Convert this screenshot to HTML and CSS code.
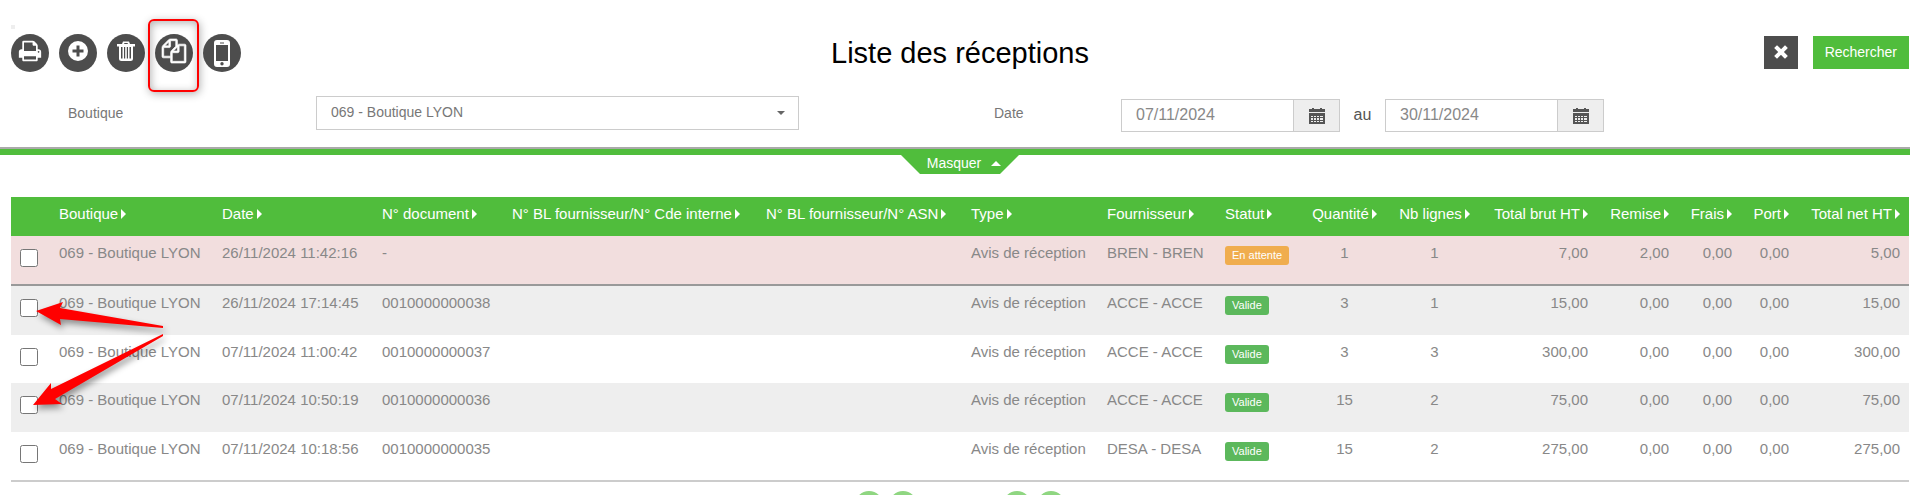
FILE: index.html
```html
<!DOCTYPE html>
<html lang="fr">
  <head>
    <meta charset="UTF-8" />
    <meta name="viewport" content="width=device-width, initial-scale=1.0" />
    <title>Liste des réceptions</title>
    <link rel="stylesheet" href="styles.css">
  </head>
  <body>
    <header class="topbar">
      <div class="actions">
        <span class="handle"></span>
        <button type="button" class="round-button" aria-label="Imprimer">
          <svg width="24" height="24" viewBox="0 0 1792 1792"><path d="M448 1536h896v-256h-896v256zm0-640h896v-384h-160q-40 0-68-28t-28-68v-160h-640v640zm1152 64q0-26-19-45t-45-19-45 19-19 45 19 45 45 19 45-19 19-45zm128 0v416q0 13-9.500 22.500t-22.500 9.500h-224v160q0 40-28 68t-68 28h-960q-40 0-68-28t-28-68v-160h-224q-13 0-22.500-9.500t-9.500-22.500v-416q0-79 56.500-135.500t135.500-56.500h64v-544q0-40 28-68t68-28h672q40 0 88 20t76 48l152 152q28 28 48 76t20 88v256h64q79 0 135.500 56.500t56.500 135.500z"/></svg>
        </button>
        <button type="button" class="round-button" aria-label="Ajouter">
          <svg width="24" height="24" viewBox="0 0 24 24"><path fill-rule="evenodd" d="M12 2a10 10 0 1 0 0 20a10 10 0 1 0 0-20zM10.500 6.500h3v4h4v3h-4v4h-3v-4h-4v-3h4z"/></svg>
        </button>
        <button type="button" class="round-button" aria-label="Supprimer">
          <svg width="24" height="24" viewBox="0 0 24 24"><path fill-rule="evenodd" d="M3 5h5l1-2.500h6l1 2.500h5v2.500h-2v12a2.500 2.500 0 0 1-2.500 2.500h-9a2.500 2.500 0 0 1-2.500-2.500v-12h-2zM10 5h4l-.5-1h-3zM7 8v11.500h1.500v-11.500zM10 8v11.500h1.200v-11.500zM12.800 8v11.500h1.200v-11.500zM15.500 8v11.500h1.500v-11.500z"/></svg>
        </button>
        <button type="button" class="round-button highlighted" aria-label="Dupliquer">
          <svg class="bold" width="24" height="24" viewBox="0 0 1792 1792"><path d="M1696 384q40 0 68 28t28 68v1216q0 40-28 68t-68 28h-960q-40 0-68-28t-28-68v-288h-544q-40 0-68-28t-28-68v-672q0-40 20-88t48-76l408-408q28-28 76-48t88-20h416q40 0 68 28t28 68v328q68-40 128-40h416zm-544 213l-299 299h299v-299zm-640-384l-299 299h299v-299zm196 647l316-316v-416h-384v416q0 40-28 68t-68 28h-416v640h512v-256q0-40 20-88t48-76zm956 804v-1152h-384v416q0 40-28 68t-68 28h-416v640h896z"/></svg>
        </button>
        <button type="button" class="round-button phone" aria-label="Mobile">
          <svg width="16" height="27" viewBox="0 0 16 27"><path fill-rule="evenodd" d="M3 0h10a3 3 0 0 1 3 3v21a3 3 0 0 1-3 3h-10a3 3 0 0 1-3-3v-21a3 3 0 0 1 3-3zM2 5v16h12v-16zM6 2.500v1h4v-1zM8 22a1.700 1.700 0 1 0 0 3.400a1.700 1.700 0 1 0 0-3.400z"/></svg>
        </button>
      </div>
      <h1>Liste des réceptions</h1>
      <div class="search-actions">
        <button type="button" class="btn btn-dark" aria-label="Effacer">
          <svg width="14" height="14" viewBox="0 0 14 14"><path d="M3 3l8 8M11 3l-8 8" stroke="#fff" stroke-width="4" stroke-linecap="square"/></svg>
        </button>
        <button type="button" class="btn btn-green">Rechercher</button>
      </div>
    </header>

    <form class="filters">
      <label for="boutique">Boutique</label>
      <div class="select-box">
        <select id="boutique">
          <option>069 - Boutique LYON</option>
        </select>
      </div>
      <label for="dateFrom" class="date-label">Date</label>
      <div class="dates">
        <div class="date-group">
          <input type="text" id="dateFrom" value="07/11/2024" />
          <button type="button" aria-label="Choisir la date de début">
            <svg width="16" height="16" viewBox="0 0 16 16"><path fill-rule="evenodd" d="M0 1h3v-1h2v1h6v-1h2v1h3v3h-16zM0 5h16v11h-16zM2 8v1h2v-1zM5 8v1h2v-1zM8 8v1h2v-1zM11 8v1h3v-1zM2 10v2h2v-2zM5 10v2h2v-2zM8 10v2h2v-2zM11 10v2h3v-2zM2 13v1h2v-1zM5 13v1h2v-1zM8 13v1h2v-1zM11 13v1h3v-1z"/></svg>
          </button>
        </div>
        <label for="dateTo" class="between">au</label>
        <div class="date-group">
          <input type="text" id="dateTo" value="30/11/2024" />
          <button type="button" aria-label="Choisir la date de fin">
            <svg width="16" height="16" viewBox="0 0 16 16"><path fill-rule="evenodd" d="M0 1h3v-1h2v1h6v-1h2v1h3v3h-16zM0 5h16v11h-16zM2 8v1h2v-1zM5 8v1h2v-1zM8 8v1h2v-1zM11 8v1h3v-1zM2 10v2h2v-2zM5 10v2h2v-2zM8 10v2h2v-2zM11 10v2h3v-2zM2 13v1h2v-1zM5 13v1h2v-1zM8 13v1h2v-1zM11 13v1h3v-1z"/></svg>
          </button>
        </div>
      </div>
    </form>

    <div class="separator">
      <button type="button" class="toggle">Masquer <span class="caret-up"></span></button>
    </div>

    <main class="list">
      <table>
        <colgroup>
          <col class="c-check"><col class="c-shop"><col class="c-date"><col class="c-doc">
          <col class="c-order"><col class="c-asn"><col class="c-type"><col class="c-supplier">
          <col class="c-status"><col class="c-qty"><col class="c-lines"><col class="c-gross">
          <col class="c-discount"><col class="c-fees"><col class="c-port"><col class="c-net">
        </colgroup>
        <thead>
          <tr>
            <th></th>
            <th class="sort">Boutique</th>
            <th class="sort">Date</th>
            <th class="sort">N° document</th>
            <th class="sort">N° BL fournisseur/N° Cde interne</th>
            <th class="sort">N° BL fournisseur/N° ASN</th>
            <th class="sort">Type</th>
            <th class="sort">Fournisseur</th>
            <th class="sort">Statut</th>
            <th class="sort center">Quantité</th>
            <th class="sort center">Nb lignes</th>
            <th class="sort num">Total brut HT</th>
            <th class="sort num">Remise</th>
            <th class="sort num">Frais</th>
            <th class="sort num">Port</th>
            <th class="sort num">Total net HT</th>
          </tr>
        </thead>
        <tbody>
          <tr class="pending">
            <td><input type="checkbox" aria-label="Réception du 26/11/2024 11:42:16" /></td>
            <td>069 - Boutique LYON</td>
            <td>26/11/2024 11:42:16</td>
            <td>-</td>
            <td></td>
            <td></td>
            <td>Avis de réception</td>
            <td>BREN - BREN</td>
            <td><span class="badge waiting">En attente</span></td>
            <td class="center">1</td>
            <td class="center">1</td>
            <td class="num">7,00</td>
            <td class="num">2,00</td>
            <td class="num">0,00</td>
            <td class="num">0,00</td>
            <td class="num">5,00</td>
          </tr>
          <tr>
            <td><input type="checkbox" aria-label="Réception 0010000000038" /></td>
            <td>069 - Boutique LYON</td>
            <td>26/11/2024 17:14:45</td>
            <td>0010000000038</td>
            <td></td>
            <td></td>
            <td>Avis de réception</td>
            <td>ACCE - ACCE</td>
            <td><span class="badge">Valide</span></td>
            <td class="center">3</td>
            <td class="center">1</td>
            <td class="num">15,00</td>
            <td class="num">0,00</td>
            <td class="num">0,00</td>
            <td class="num">0,00</td>
            <td class="num">15,00</td>
          </tr>
          <tr>
            <td><input type="checkbox" aria-label="Réception 0010000000037" /></td>
            <td>069 - Boutique LYON</td>
            <td>07/11/2024 11:00:42</td>
            <td>0010000000037</td>
            <td></td>
            <td></td>
            <td>Avis de réception</td>
            <td>ACCE - ACCE</td>
            <td><span class="badge">Valide</span></td>
            <td class="center">3</td>
            <td class="center">3</td>
            <td class="num">300,00</td>
            <td class="num">0,00</td>
            <td class="num">0,00</td>
            <td class="num">0,00</td>
            <td class="num">300,00</td>
          </tr>
          <tr>
            <td><input type="checkbox" aria-label="Réception 0010000000036" /></td>
            <td>069 - Boutique LYON</td>
            <td>07/11/2024 10:50:19</td>
            <td>0010000000036</td>
            <td></td>
            <td></td>
            <td>Avis de réception</td>
            <td>ACCE - ACCE</td>
            <td><span class="badge">Valide</span></td>
            <td class="center">15</td>
            <td class="center">2</td>
            <td class="num">75,00</td>
            <td class="num">0,00</td>
            <td class="num">0,00</td>
            <td class="num">0,00</td>
            <td class="num">75,00</td>
          </tr>
          <tr>
            <td><input type="checkbox" aria-label="Réception 0010000000035" /></td>
            <td>069 - Boutique LYON</td>
            <td>07/11/2024 10:18:56</td>
            <td>0010000000035</td>
            <td></td>
            <td></td>
            <td>Avis de réception</td>
            <td>DESA - DESA</td>
            <td><span class="badge">Valide</span></td>
            <td class="center">15</td>
            <td class="center">2</td>
            <td class="num">275,00</td>
            <td class="num">0,00</td>
            <td class="num">0,00</td>
            <td class="num">0,00</td>
            <td class="num">275,00</td>
          </tr>
        </tbody>
      </table>

      <!-- arrows pointing at the rows to tick -->
      <svg class="arrows" width="150" height="100" viewBox="25 290 150 100">
        <path d="M36 311L63 302L60 308L163 326L163 328L60 319L61 325Z"/>
        <path d="M33 405L51 383L51 389L163 334L163 336L55 399L62 404Z"/>
      </svg>
    </main>

    <nav class="pager" aria-label="Pagination">
      <div class="pager-group">
        <button type="button" aria-label="Première page"></button>
        <button type="button" aria-label="Page précédente"></button>
      </div>
      <div class="pager-group">
        <button type="button" aria-label="Page suivante"></button>
        <button type="button" aria-label="Dernière page"></button>
      </div>
    </nav>
  </body>
</html>
```
FILE: styles.css
```css
* {
  margin: 0;
  padding: 0;
  box-sizing: border-box;
}

body {
  font-family: "Liberation Sans", Arial, sans-serif;
  font-size: 15px;
  line-height: 20px;
  background: #fff;
  color: #888;
  height: 100vh;
  overflow: hidden;
}

button,
input,
select {
  font-family: inherit;
  font-size: inherit;
}

button {
  border: none;
  cursor: pointer;
}

.topbar {
  display: grid;
  grid-template-columns: 1fr auto 1fr;
  align-items: center;
  padding: 34px 1px 0 11px;
}

.actions {
  position: relative;
  display: flex;
  gap: 10px;
}

.handle {
  position: absolute;
  top: -9px;
  left: 0;
  width: 4px;
  height: 4px;
  background: #eee;
}

.round-button {
  position: relative;
  display: flex;
  justify-content: center;
  align-items: center;
  width: 38px;
  height: 38px;
  padding-bottom: 4px;
  border-radius: 50%;
  background: #4d4d4d;
}

.round-button svg {
  display: block;
  flex: none;
  fill: #fff;
}

.round-button .bold {
  overflow: visible;
  stroke: #fff;
  stroke-width: 50;
}

.phone {
  padding-bottom: 0;
}

.highlighted::after {
  content: "";
  box-sizing: border-box;
  position: absolute;
  top: -15px;
  left: -7px;
  width: 51px;
  height: 73px;
  border: 2px solid #f00;
  border-radius: 6px;
  box-shadow: 1px 2px 8px rgba(0, 0, 0, 0.3), inset 1px 2px 8px rgba(0, 0, 0, 0.3);
}

h1 {
  font-size: 29px;
  font-weight: 400;
  line-height: 38px;
  color: #000;
}

.search-actions {
  display: flex;
  justify-content: flex-end;
  gap: 15px;
  padding-bottom: 1px;
}

.btn {
  display: flex;
  align-items: center;
  justify-content: center;
  height: 33px;
  color: #fff;
  font-size: 14px;
}

.btn-dark {
  width: 34px;
  padding-bottom: 2px;
  background: #4d4d4d;
}

.btn-green {
  padding: 0 12px 1px;
  background: #50bd3c;
}

.filters {
  display: grid;
  grid-template-columns: 248fr 483fr 322fr 789fr;
  align-items: center;
  padding: 23px 0 15px 68px;
  font-size: 14px;
  color: #777;
}

.filters > label {
  padding-bottom: 2px;
}

.date-label {
  justify-self: end;
  width: 127px;
}

.select-box {
  position: relative;
  padding-bottom: 1px;
}

.select-box::after {
  content: "";
  position: absolute;
  top: 15px;
  right: 14px;
  border: 4px solid transparent;
  border-top-color: #666;
  border-bottom: none;
}

select {
  appearance: none;
  display: block;
  width: 100%;
  height: 34px;
  padding: 0 14px 2px;
  border: 1px solid #ccc;
  background: #fff;
  color: #777;
}

.dates {
  display: flex;
  align-items: center;
  padding-top: 4px;
  font-size: 16px;
}

.date-group {
  display: flex;
  width: 219px;
  height: 33px;
  border: 1px solid #ccc;
}

.date-group input {
  flex: 1;
  min-width: 0;
  padding: 0 14px 2px;
  border: none;
  color: #888;
}

.date-group button {
  display: flex;
  align-items: center;
  justify-content: center;
  width: 46px;
  border-left: 1px solid #ccc;
  background: #eee;
}

.date-group svg {
  fill: #555;
}

.between {
  width: 45px;
  padding-bottom: 2px;
  text-align: center;
  color: #555;
}

.separator {
  display: flex;
  justify-content: center;
  height: 50px;
  padding-left: 10px;
  border-top: 2px solid #aaa;
  background: linear-gradient(#50bd3c 6px, transparent 6px);
}

.toggle {
  display: flex;
  align-items: center;
  justify-content: center;
  gap: 10px;
  width: 118px;
  height: 19px;
  margin-top: 6px;
  padding: 0 0 3px 8px;
  background: #50bd3c;
  clip-path: polygon(0 0, 100% 0, 99px 100%, 19px 100%);
  color: #fff;
  font-size: 14px;
}

.caret-up {
  border: 5px solid transparent;
  border-bottom-color: #fff;
  border-top: none;
}

.list {
  position: relative;
  padding: 0 1px 0 11px;
}

table {
  width: 100%;
  table-layout: fixed;
  border-collapse: separate;
  border-spacing: 0;
  border-bottom: 2px solid #ccc;
}

.c-check { width: 39px; }
.c-shop { width: 163px; }
.c-date { width: 160px; }
.c-doc { width: 130px; }
.c-order { width: 254px; }
.c-asn { width: 205px; }
.c-type { width: 136px; }
.c-supplier { width: 118px; }
.c-status { width: 86px; }
.c-qty { width: 85px; }
.c-lines { width: 95px; }
.c-gross { width: 115px; }
.c-discount { width: 81px; }
.c-fees { width: 63px; }
.c-port { width: 57px; }
.c-net { width: 111px; }

th,
td {
  padding: 7px 9px 0;
  text-align: left;
  vertical-align: top;
  white-space: nowrap;
}

th {
  height: 39px;
  background: #50bd3c;
  color: #fff;
  font-weight: 400;
}

.sort::after {
  content: "";
  display: inline-block;
  margin-left: 3px;
  border: 5px solid transparent;
  border-left-color: #fff;
  border-right: none;
}

td {
  height: 48px;
}

tbody tr:nth-child(even) td {
  height: 49px;
  background: #eee;
}

.pending td {
  height: 50px;
  border-bottom: 2px solid #999;
  background: #f2dede;
}

.center {
  text-align: center;
}

.num {
  text-align: right;
}

td input {
  display: block;
  width: 18px;
  height: 18px;
  margin-top: 6px;
}

.badge {
  display: inline-block;
  margin-top: 3px;
  padding: 0 7px;
  border-radius: 3px;
  background: #5cb85c;
  color: #fff;
  font-size: 11px;
  line-height: 19px;
}

.waiting {
  background: #f0ad4e;
}

/* drawn over the first columns */
.arrows {
  position: absolute;
  top: 93px;
  left: 25px;
  overflow: visible;
  fill: #f00;
  filter: drop-shadow(2px 4px 3px rgba(0, 0, 0, 0.4));
  pointer-events: none;
}

.pager {
  display: flex;
  justify-content: center;
  gap: 86px;
  padding: 9px 0 0 10px;
}

.pager-group {
  display: flex;
  gap: 6px;
}

.pager button {
  width: 28px;
  height: 28px;
  border-radius: 50%;
  background: #8fd681;
}
```
